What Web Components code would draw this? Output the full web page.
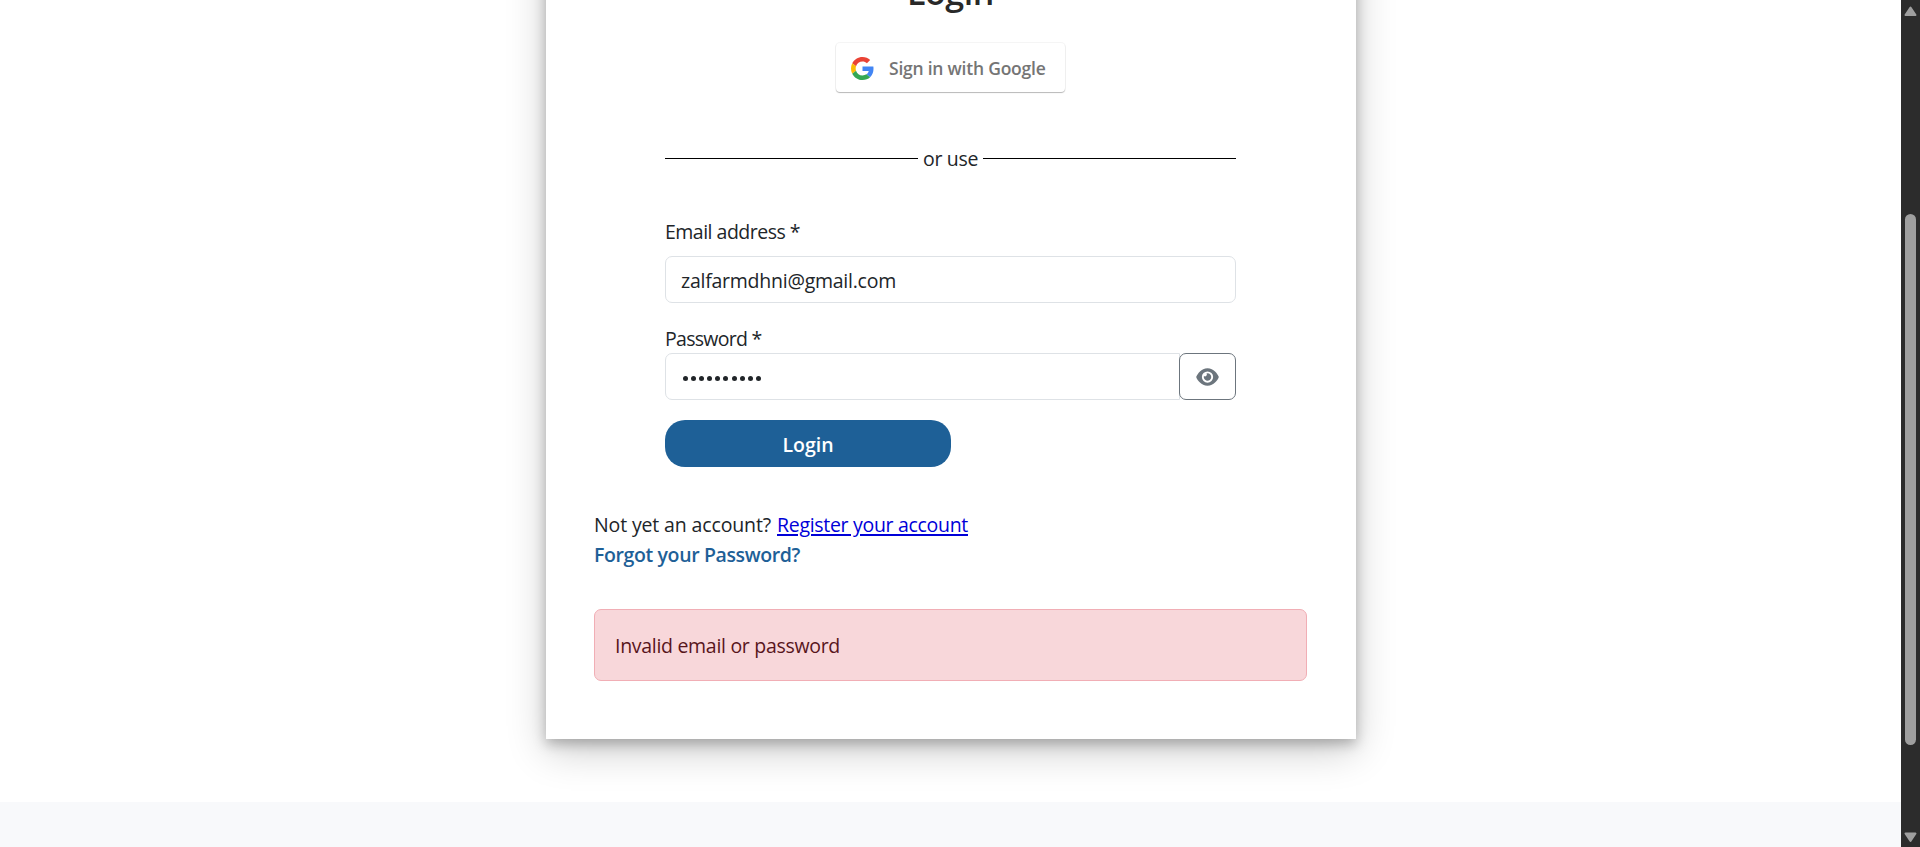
<!DOCTYPE html>
<html lang="en">
<head>
<meta charset="utf-8">
<title>Login</title>
<style>
html,body{margin:0;height:100%;overflow:hidden;background:#fff}
body{font-family:"Open Sans","Noto Sans",sans-serif;font-size:19.5px;line-height:30px;color:#212529}
</style>
</head>
<body>
<login-page></login-page>
<script>
function define(name, html, setup) {
  customElements.define(name, class extends HTMLElement {
    constructor() {
      super();
      const t = document.createElement('template');
      t.innerHTML = html;
      this.attachShadow({mode: 'open'}).append(t.content.cloneNode(true));
    }
    connectedCallback() { if (setup) setup.call(this, this.shadowRoot); }
  });
}

// Text run whose tracking is adjusted to an advance width given by "w".
define('fit-text', `<style>:host{display:inline-block;white-space:nowrap}</style><slot></slot>`, function () {
  this.style.letterSpacing = '0px';
  const n = this.textContent.length, w = +this.getAttribute('w');
  const d = (w - this.getBoundingClientRect().width) / n;
  this.style.letterSpacing = d.toFixed(3) + 'px';
});

define('google-button', `<style>
:host{display:flex;align-items:center;box-sizing:border-box;width:229px;height:49px;padding-left:15px;gap:15px;background:#fff;border-radius:4px;box-shadow:0 0 0 1px rgba(0,0,0,.04),0 1px 1px rgba(0,0,0,.25);color:#757575;font-size:17.5px;font-weight:600}
svg{width:23px;height:23px;flex:none;margin-top:2px}
</style>
<svg viewBox="0 0 48 48"><path fill="#EA4335" d="M24 9.5c3.54 0 6.71 1.22 9.21 3.6l6.85-6.85C35.9 2.38 30.47 0 24 0 14.62 0 6.51 5.38 2.56 13.22l7.98 6.19C12.43 13.72 17.74 9.5 24 9.5z"/><path fill="#4285F4" d="M46.98 24.55c0-1.57-.15-3.09-.38-4.55H24v9.02h12.94c-.58 2.96-2.26 5.48-4.78 7.18l7.73 6c4.51-4.18 7.09-10.36 7.09-17.65z"/><path fill="#FBBC05" d="M10.53 28.59c-.48-1.45-.76-2.99-.76-4.59s.27-3.14.76-4.59l-7.98-6.19C.92 16.46 0 20.12 0 24c0 3.88.92 7.54 2.56 10.78l7.97-6.19z"/><path fill="#34A853" d="M24 48c6.48 0 11.93-2.13 15.89-5.81l-7.73-6c-2.15 1.45-4.92 2.3-8.16 2.3-6.26 0-11.57-4.22-13.47-9.91l-7.98 6.19C6.51 42.62 14.62 48 24 48z"/></svg>
<slot></slot>`);

define('or-divider', `<style>
:host{display:flex;gap:5px;height:30px}
i{flex:1;height:1px;background:#000;margin-top:14px}
</style><i></i><slot></slot><i></i>`);

define('form-field', `<style>
:host{display:block}
.box{display:flex;height:47px}
.in{flex:1;box-sizing:border-box;height:47px;padding:9px 15px 7px;border:1px solid #dee2e6;border-radius:7px}
:host([joined]) .in{border-radius:7px 0 0 7px;margin-right:-1px}
.lab{height:30px}
:host([spaced]) .lab{margin-bottom:9px}
:host([joined]) .lab{margin-bottom:-1px}
</style><div class="lab"><slot name="label"></slot></div><div class="box"><div class="in"><slot></slot></div><slot name="action"></slot></div>`);

define('password-dots', `<style>
:host{display:flex;align-items:center;gap:3.1px;height:30px;padding:0 0 0 2px;box-sizing:border-box}
i{width:5px;height:5px;border-radius:50%;background:#212529}
</style>${'<i></i>'.repeat(10)}`);

define('eye-button', `<style>
:host{display:flex;align-items:center;justify-content:center;box-sizing:border-box;width:57px;height:47px;border:1px solid #6c757d;border-radius:7px;color:#6c757d}
svg{width:23px;height:20px}
</style><svg viewBox="0 0 576 512"><path fill="currentColor" fill-rule="evenodd" d="M288 32c-80.800 0-145.500 36.800-192.600 80.600C48.600 156 17.300 208 2.500 243.700c-3.300 7.900-3.300 16.700 0 24.600C17.300 304 48.600 356 95.400 399.400C142.500 443.200 207.200 480 288 480s145.500-36.800 192.600-80.600c46.800-43.500 78.100-95.400 93-131.100c3.300-7.900 3.300-16.700 0-24.600c-14.900-35.700-46.200-87.700-93-131.100C433.500 68.800 368.800 32 288 32zM144 256a144 144 0 1 1 288 0 144 144 0 1 1-288 0zM288 160a95.310 95.310 0 0 0-25.310 3.790 47.850 47.850 0 0 1-66.900 66.900A95.780 95.780 0 1 0 288 160z"/></svg>`);

define('submit-button', `<style>
:host{display:flex;align-items:center;justify-content:center;box-sizing:border-box;width:286px;height:47px;padding-top:2px;border-radius:20px;background:#1e6097;color:#fff;font-weight:600}
</style><slot></slot>`);

define('alert-box', `<style>
:host{display:block;box-sizing:border-box;height:72px;padding:21px 20px;border:1px solid #f1aeb5;border-radius:7px;background:#f8d7da;color:#58151c}
</style><slot></slot>`);

define('login-card', `<style>
:host{display:flex;flex-direction:column;box-sizing:border-box;width:810px;height:816px;margin:-77px 0 0 546px;padding:48px 49px 48px 48px;background:#fff;box-shadow:0 5px 12px rgba(0,0,0,.25),0 12px 38px rgba(0,0,0,.2)}
h1{margin:0;font-size:34px;line-height:42px;font-weight:600;text-align:center;color:#292929;height:72px}
google-button{margin:0 0 52px 242px}
.form{width:571px;margin-left:71px}
or-divider{margin-bottom:43px}
form-field[spaced]{margin-bottom:21px}
submit-button{margin:20px 0 43px}
a{color:#0000d8;text-decoration:underline;text-decoration-thickness:2px;text-underline-offset:2px;text-decoration-skip-ink:auto}
.row{height:30px;display:flex;gap:6px}
.forgot{color:#1e6097;font-weight:600;margin-bottom:39px}
</style>
<h1><fit-text w="87">Login</fit-text></h1>
<google-button><fit-text w="156.500">Sign in with Google</fit-text></google-button>
<div class="form">
<or-divider><fit-text w="55">or use</fit-text></or-divider>
<form-field spaced><fit-text slot="label" w="135">Email address *</fit-text><fit-text w="215">zalfarmdhni@gmail.com</fit-text></form-field>
<form-field joined><fit-text slot="label" w="96.500">Password *</fit-text><password-dots></password-dots><eye-button slot="action"></eye-button></form-field>
<submit-button><fit-text w="51">Login</fit-text></submit-button>
</div>
<div class="row"><fit-text w="177">Not yet an account?</fit-text><a><fit-text w="191" style="display:inline">Register your account</fit-text></a></div>
<div class="row forgot"><fit-text w="206">Forgot your Password?</fit-text></div>
<alert-box><fit-text w="225">Invalid email or password</fit-text></alert-box>`);

define('scroll-bar', `<style>
:host{display:flex;flex-direction:column;align-items:center;width:19px;height:847px;background:#2c2c2c}
svg{width:13px;height:11px;flex:none;fill:#9f9f9f;stroke:#9f9f9f;stroke-width:2;stroke-linejoin:round}
.up{margin-top:6px}
.thumb{width:11px;height:531px;margin-top:197px;border-radius:5.5px;background:#9f9f9f}
.down{margin-top:87px}
</style><svg class="up" viewBox="0 0 13 11"><path d="M6.500 1.500 11.500 9h-10z"/></svg><div class="thumb"></div><svg class="down" viewBox="0 0 13 11"><path d="M6.500 9 11.500 1.500h-10z"/></svg>`);

define('login-page', `<style>
:host{display:flex;height:847px;overflow:hidden}
main{width:1901px;height:847px;overflow:hidden;display:flow-root}
footer{height:45px;margin-top:63px;background:#f8f9fb}
</style><main><login-card></login-card><footer></footer></main><scroll-bar></scroll-bar>`);
</script>
</body>
</html>
